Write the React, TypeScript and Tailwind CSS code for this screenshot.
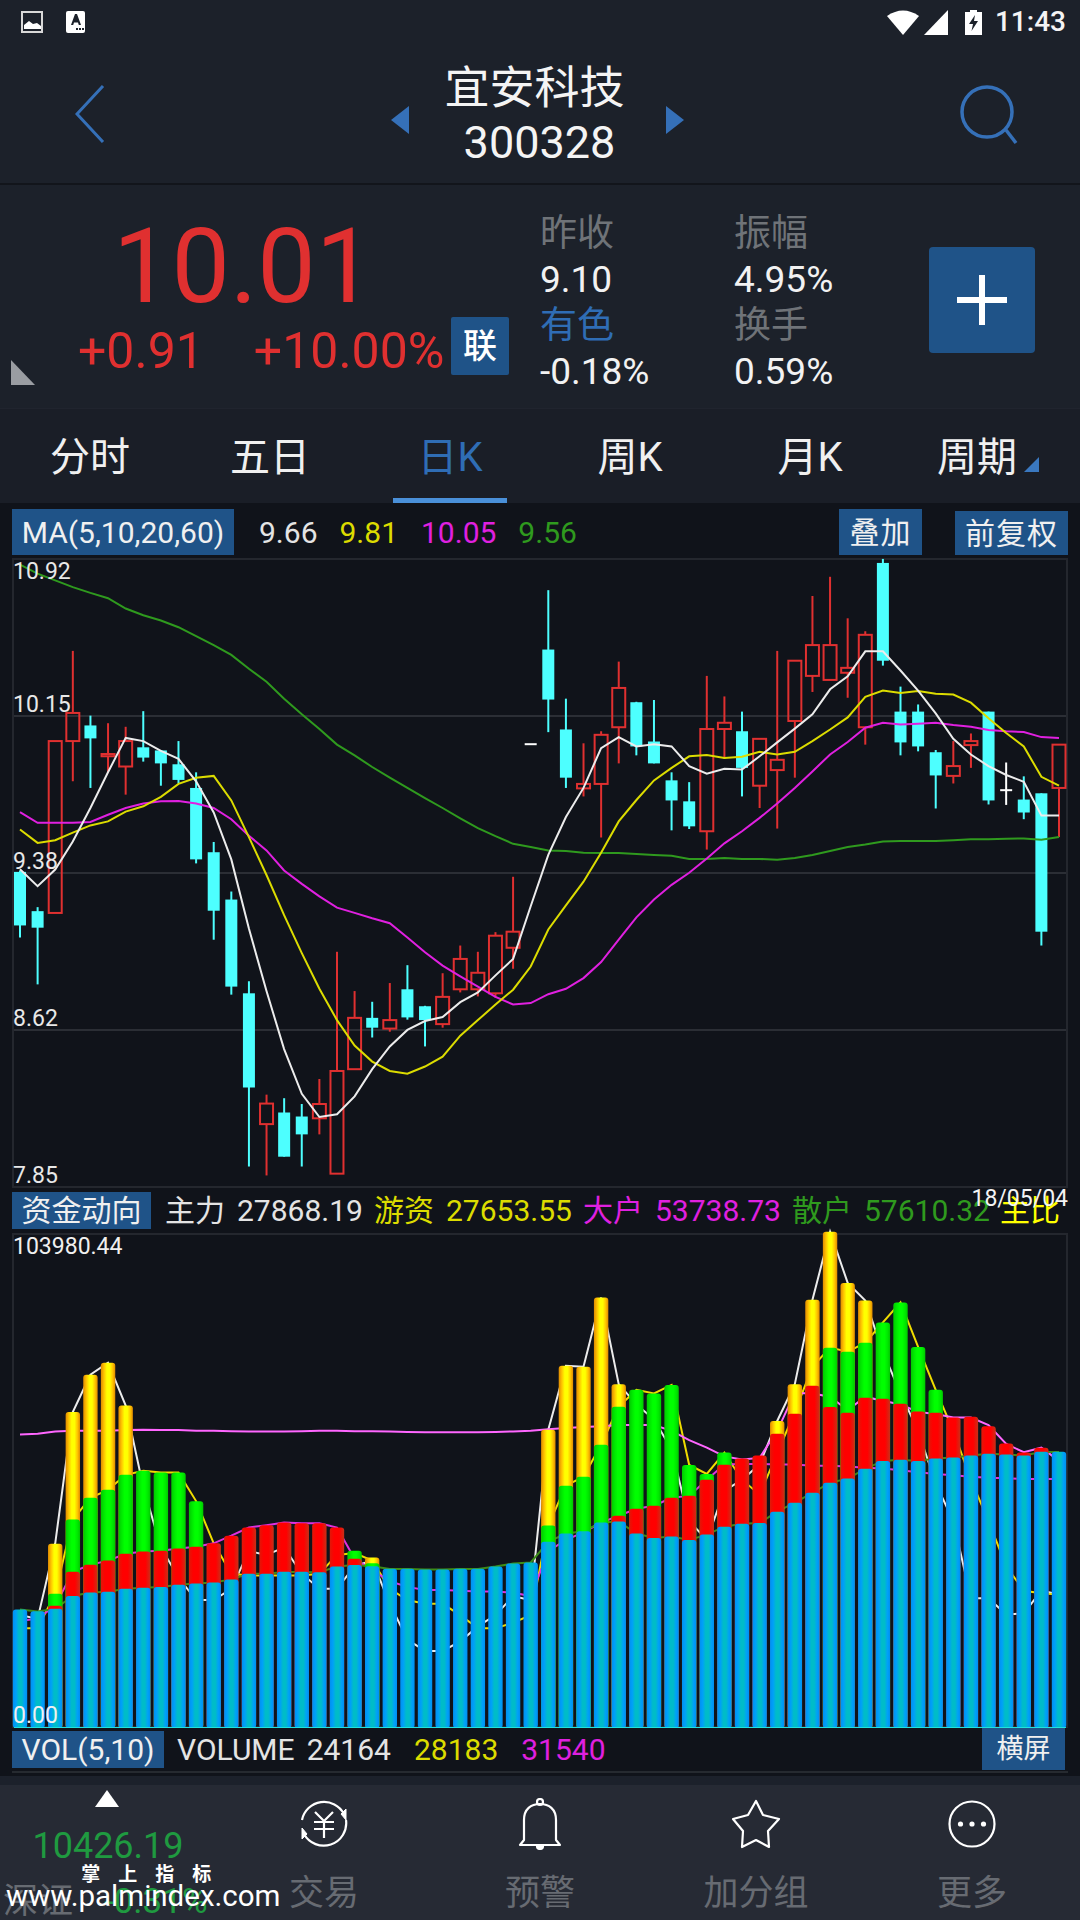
import React from "react";

// type, wick top, body top, body bottom, wick bottom (y values read off the chart crops)
type Candle = ["c" | "r" | "w", number, number, number, number];

const candles: Candle[] = [
  ["c", 830, 833, 953, 980],
  ["c", 912, 921, 958, 1085],
  ["r", 540, 540, 925, 925],
  ["r", 338, 477, 540, 630],
  ["c", 483, 505, 534, 645],
  ["r", 500, 569, 574, 610],
  ["r", 508, 540, 597, 660],
  ["c", 473, 554, 577, 586],
  ["c", 560, 561, 590, 640],
  ["c", 540, 592, 627, 635],
  ["c", 610, 645, 805, 814],
  ["c", 766, 789, 920, 985],
  ["c", 877, 895, 1090, 1108],
  ["c", 1078, 1105, 1316, 1493],
  ["r", 1332, 1352, 1398, 1513],
  ["c", 1340, 1372, 1471, 1471],
  ["c", 1353, 1381, 1421, 1493],
  ["r", 1297, 1353, 1385, 1421],
  ["r", 1012, 1279, 1509, 1509],
  ["r", 1100, 1160, 1275, 1275],
  ["c", 1124, 1160, 1182, 1204],
  ["r", 1082, 1165, 1184, 1191],
  ["c", 1042, 1096, 1159, 1164],
  ["c", 1133, 1134, 1165, 1224],
  ["r", 1060, 1113, 1174, 1182],
  ["r", 998, 1028, 1096, 1103],
  ["r", 1012, 1059, 1096, 1112],
  ["r", 968, 976, 1105, 1115],
  ["r", 844, 967, 1003, 1050],
  ["w", 548, 547, 549, 548],
  ["c", 202, 335, 447, 520],
  ["c", 445, 514, 622, 645],
  ["r", 545, 636, 646, 664],
  ["r", 518, 526, 636, 756],
  ["r", 362, 421, 509, 590],
  ["c", 452, 453, 552, 572],
  ["c", 448, 541, 590, 590],
  ["c", 610, 628, 673, 740],
  ["c", 632, 675, 731, 737],
  ["r", 394, 513, 742, 783],
  ["r", 440, 499, 513, 580],
  ["c", 474, 518, 600, 664],
  ["r", 535, 535, 640, 690],
  ["r", 338, 582, 605, 736],
  ["r", 360, 360, 495, 622],
  ["r", 215, 325, 394, 430],
  ["r", 172, 325, 403, 403],
  ["r", 265, 376, 387, 443],
  ["r", 294, 302, 509, 548],
  ["c", 132, 141, 360, 371],
  ["c", 418, 474, 543, 572],
  ["c", 458, 474, 552, 563],
  ["c", 560, 565, 617, 691],
  ["r", 540, 596, 618, 635],
  ["r", 523, 540, 549, 600],
  ["c", 474, 474, 673, 682],
  ["w", 588, 650, 653, 683],
  ["c", 619, 671, 700, 715],
  ["c", 657, 657, 967, 998],
  ["r", 548, 548, 645, 755],
];

const ma5 = [827, 865, 828, 765, 690, 610, 533, 540, 562, 580, 630, 700, 805, 960, 1100, 1230, 1330, 1382, 1376, 1336, 1275, 1224, 1187, 1167, 1158, 1125, 1103, 1065, 1028, 910, 795, 710, 645, 556, 531, 552, 547, 552, 596, 613, 602, 604, 574, 543, 512, 480, 424, 395, 339, 339, 382, 427, 478, 535, 570, 596, 616, 631, 707, 707];
const ma10 = [738, 768, 762, 745, 729, 720, 698, 686, 665, 636, 622, 618, 673, 755, 840, 930, 1015, 1095, 1165, 1222, 1258, 1279, 1285, 1269, 1247, 1200, 1165, 1130, 1097, 1045, 962, 908, 855, 790, 720, 672, 628, 600, 574, 571, 578, 575, 564, 570, 564, 540, 514, 487, 441, 427, 432, 428, 434, 436, 454, 489, 522, 552, 620, 640];
const ma20 = [699, 723, 723, 723, 721, 705, 690, 680, 675, 674, 680, 690, 715, 752, 785, 830, 860, 888, 913, 925, 937, 948, 980, 1013, 1043, 1067, 1090, 1113, 1130, 1127, 1107, 1095, 1071, 1035, 985, 935, 895, 862, 835, 803, 769, 742, 712, 680, 645, 608, 570, 542, 510, 499, 503, 501, 499, 504, 508, 515, 518, 520, 531, 533];
const ma60 = [145, 165, 180, 195, 208, 220, 243, 258, 270, 285, 305, 325, 347, 378, 407, 445, 480, 513, 548, 572, 598, 622, 645, 668, 690, 713, 735, 753, 770, 777, 785, 786, 790, 791, 791, 793, 795, 797, 804, 804, 802, 804, 804, 806, 802, 795, 786, 777, 772, 765, 764, 764, 764, 762, 760, 760, 759, 758, 761, 755];

// blue, red, green, yellow tops; 0 = segment missing
const bars: number[][] = [
  [1115, 0, 0, 0], [1120, 0, 0, 0], [1113, 1105, 1073, 940], [1079, 1015, 876, 590], [1070, 996, 818, 491],
  [1068, 985, 797, 459], [1060, 967, 757, 573], [1057, 961, 746, 0], [1055, 959, 751, 0], [1049, 953, 751, 0],
  [1046, 948, 827, 0], [1043, 939, 0, 0], [1035, 919, 0, 0], [1020, 897, 0, 0], [1020, 891, 0, 0],
  [1015, 884, 0, 0], [1015, 886, 0, 0], [1016, 886, 0, 0], [1001, 897, 0, 0], [997, 980, 959, 0],
  [1000, 0, 992, 977], [1007, 0, 0, 0], [1007, 0, 0, 0], [1009, 0, 0, 0], [1009, 0, 0, 0],
  [1007, 0, 0, 0], [1007, 0, 0, 0], [1001, 0, 0, 0], [993, 0, 0, 0], [990, 0, 0, 0],
  [935, 0, 892, 637], [913, 0, 786, 467], [907, 0, 762, 470], [884, 0, 677, 286], [881, 866, 576, 516],
  [913, 847, 531, 0], [925, 839, 541, 0], [921, 818, 518, 0], [930, 813, 731, 0], [916, 770, 755, 0],
  [895, 730, 698, 0], [887, 714, 0, 0], [885, 706, 0, 0], [855, 648, 0, 614], [831, 595, 0, 516],
  [805, 520, 0, 292], [778, 577, 419, 111], [767, 592, 430, 247], [741, 552, 406, 294], [720, 555, 352, 0],
  [717, 568, 299, 0], [720, 589, 417, 0], [714, 592, 531, 0], [711, 605, 0, 0], [706, 603, 0, 0],
  [701, 628, 0, 0], [703, 674, 0, 0], [706, 698, 0, 0], [696, 685, 0, 0], [696, 0, 0, 0],
];

const flowWhite = [1130, 1140, 940, 590, 491, 459, 573, 790, 950, 1030, 1090, 1090, 1060, 960, 970, 950, 1020, 1060, 1060, 1000, 985, 1100, 1195, 1225, 1225, 1200, 1160, 1130, 1080, 1090, 637, 467, 470, 286, 516, 570, 610, 690, 880, 930, 800, 770, 730, 614, 516, 292, 111, 247, 294, 430, 540, 640, 780, 880, 1085, 1085, 1128, 1125, 1065, 1075];
const flowYellow = [1165, 1165, 1073, 876, 818, 797, 757, 746, 751, 751, 827, 939, 1020, 1025, 1025, 1025, 1025, 1020, 970, 965, 985, 1060, 1090, 1100, 1100, 1130, 1165, 1165, 1150, 1130, 892, 786, 762, 677, 576, 531, 541, 518, 731, 755, 698, 770, 810, 700, 590, 470, 419, 430, 406, 352, 299, 417, 531, 640, 770, 880, 1000, 1065, 1072, 1075];
const flowMagenta = [1145, 1140, 1105, 1015, 996, 985, 967, 961, 959, 953, 948, 939, 919, 897, 891, 884, 886, 886, 897, 980, 1010, 1040, 1055, 1063, 1063, 1065, 1067, 1067, 1070, 1080, 960, 930, 910, 884, 866, 847, 839, 818, 813, 770, 730, 728, 728, 730, 730, 733, 733, 735, 738, 740, 745, 750, 755, 758, 762, 765, 766, 768, 768, 768];
const flowPink = [650, 648, 642, 640, 640, 640, 638, 637, 638, 638, 640, 640, 641, 642, 642, 642, 641, 640, 640, 641, 641, 642, 643, 644, 644, 644, 644, 643, 642, 640, 636, 633, 630, 628, 625, 625, 625, 640, 665, 685, 708, 716, 712, 640, 540, 540, 550, 585, 550, 560, 570, 590, 595, 605, 605, 625, 675, 697, 685, 720];

const xAt = (i: number) => 20 + i * 17.61;
const kY = (v: number) => 500 + v / 2.24;
const vY = (v: number) => 1190 + v / 2.658;

function points(values: number[], toY: (v: number) => number) {
  return values.map((v, i) => `${xAt(i).toFixed(1)},${toY(v).toFixed(1)}`).join(" ");
}

function KLineChart() {
  return (
    <svg viewBox="14 560 1052 626" className="block w-full h-full overflow-visible">
      {[716, 873, 1030].map((y) => (
        <line key={y} x1="14" x2="1066" y1={y} y2={y} stroke="#2b2e35" strokeWidth="2" />
      ))}
      {candles.map(([type, wickTop, top, bottom, wickBottom], i) => {
        const x = xAt(i);
        if (type === "c") {
          return (
            <g key={i}>
              <line x1={x} x2={x} y1={kY(wickTop)} y2={kY(wickBottom)} stroke="#4dffff" strokeWidth="2" />
              <rect x={x - 6} y={kY(top)} width="12" height={kY(bottom) - kY(top)} fill="#4dffff" />
            </g>
          );
        }
        if (type === "w") {
          return (
            <g key={i}>
              <line x1={x} x2={x} y1={kY(wickTop)} y2={kY(wickBottom)} stroke="#ffffff" strokeWidth="2" />
              <line x1={x - 6} x2={x + 6} y1={kY(top)} y2={kY(top)} stroke="#ffffff" strokeWidth="2" />
            </g>
          );
        }
        return (
          <g key={i}>
            <line x1={x} x2={x} y1={kY(wickTop)} y2={kY(top)} stroke="#e03030" strokeWidth="2" />
            <line x1={x} x2={x} y1={kY(bottom)} y2={kY(wickBottom)} stroke="#e03030" strokeWidth="2" />
            <rect x={x - 6.5} y={kY(top)} width="13" height={Math.max(kY(bottom) - kY(top), 2)} fill="none" stroke="#e03030" strokeWidth="2" />
          </g>
        );
      })}
      <polyline points={points(ma60, kY)} fill="none" stroke="#2f9a1e" strokeWidth="2" />
      <polyline points={points(ma20, kY)} fill="none" stroke="#e020e0" strokeWidth="2" />
      <polyline points={points(ma10, kY)} fill="none" stroke="#dcdc00" strokeWidth="2" />
      <polyline points={points(ma5, kY)} fill="none" stroke="#ececec" strokeWidth="2" />
    </svg>
  );
}

function Stops({ edge, mid, center }: { edge: string; mid: string; center: string }) {
  return (
    <>
      <stop offset="0" stopColor={edge} />
      <stop offset="0.22" stopColor={mid} />
      <stop offset="0.42" stopColor={center} />
      <stop offset="0.62" stopColor={center} />
      <stop offset="0.82" stopColor={mid} />
      <stop offset="1" stopColor={edge} />
    </>
  );
}

function FlowChart() {
  const base = 1728;
  const fills = ["url(#barBlue)", "url(#barRed)", "url(#barGreen)", "url(#barYellow)"];
  return (
    <svg viewBox="14 1235 1052 491" className="block w-full h-full overflow-visible">
      <defs>
        <linearGradient id="barYellow">
          <Stops edge="#e08a00" mid="#ffc400" center="#ffff00" />
        </linearGradient>
        <linearGradient id="barGreen">
          <Stops edge="#00c800" mid="#00e800" center="#00ff00" />
        </linearGradient>
        <linearGradient id="barRed">
          <stop offset="0" stopColor="#e01808" />
          <stop offset="0.3" stopColor="#ff0000" />
          <stop offset="0.65" stopColor="#ff0000" />
          <stop offset="1" stopColor="#c83018" />
        </linearGradient>
        <linearGradient id="barBlue">
          <Stops edge="#0090f0" mid="#00a0f8" center="#00bcc8" />
        </linearGradient>
      </defs>
      <polyline points={points(flowWhite, vY)} fill="none" stroke="#ececec" strokeWidth="2" />
      <polyline points={points(flowYellow, vY)} fill="none" stroke="#f0dc00" strokeWidth="2" />
      <polyline points={points(flowMagenta, vY)} fill="none" stroke="#e030e0" strokeWidth="2" />
      <polyline points={points(flowPink, vY)} fill="none" stroke="#ff66ff" strokeWidth="2" />
      <polyline points={points(bars.map((b) => b[0]), vY)} fill="none" stroke="#3c8c18" strokeWidth="2" />
      {bars.map((bar, i) => {
        const x = xAt(i) - 7.2;
        return (
          <g key={i}>
            {[3, 2, 1, 0].map((layer) =>
              bar[layer] ? (
                <rect key={layer} x={x} y={vY(bar[layer])} width="14.4" height={base - vY(bar[layer])} rx="3" fill={fills[layer]} />
              ) : null,
            )}
          </g>
        );
      })}
      <line x1="14" x2="1066" y1="1727.5" y2="1727.5" stroke="#20e0e0" strokeWidth="1" />
    </svg>
  );
}

function Rate({ label, value, blue }: { label: string; value: string; blue?: boolean }) {
  return (
    <>
      <div className={blue ? "text-[#2f6db5]" : "text-[#6f7378]"}>{label}</div>
      <div className="text-[#f2f2f2]">{value}</div>
    </>
  );
}

function NavItem({ label, children }: { label: string; children: React.ReactNode }) {
  return (
    <div className="w-[216px] flex flex-col items-center">
      <div className="h-[52px] mt-[13px] flex items-center justify-center">{children}</div>
      <div className="mt-[26px] text-[35px] leading-[36px] text-[#676b72]">{label}</div>
    </div>
  );
}

export default function App() {
  return (
    <div className="relative w-[1080px] h-[1920px] overflow-hidden bg-[#1c212a] font-[Roboto,'Noto_Sans_CJK_SC',sans-serif] text-white">
      {/* status bar */}
      <div className="h-12 flex items-center px-[21px]">
        <svg width="23" height="23" viewBox="0 0 23 23" className="-mt-1">
          <rect x="1" y="1" width="20" height="20" fill="none" stroke="#d8d8d8" strokeWidth="2" />
          <path d="M3 18 L3 14 L8 10 L12 13 L16 12 L20 15 L20 18 Z" fill="#ffffff" />
        </svg>
        <svg width="20" height="22" viewBox="0 0 20 22" className="ml-[22px] -mt-1">
          <rect x="0" y="0" width="19" height="22" rx="2" fill="#ffffff" />
          <path d="M5 14 L9 3 L11 3 L15 14 L12.8 14 L12 11.5 L8 11.5 L7.2 14 Z" fill="#1c212a" />
          <rect x="10" y="17" width="2" height="2" fill="#1c212a" />
          <rect x="13" y="17" width="2" height="2" fill="#1c212a" />
          <rect x="16" y="17" width="2" height="2" fill="#1c212a" />
        </svg>
        <svg width="32" height="25" viewBox="0 0 32 25" className="ml-auto -mt-1">
          <path d="M0 6 Q16 -5 32 6 L16 25 Z" fill="#ffffff" />
        </svg>
        <svg width="24" height="25" viewBox="0 0 24 25" className="ml-[5px] -mt-1">
          <path d="M24 0 L24 25 L0 25 Z" fill="#ffffff" />
        </svg>
        <svg width="17" height="25" viewBox="0 0 17 25" className="ml-[17px] -mt-1">
          <path d="M5 0 L12 0 L12 2 L17 2 L17 25 L0 25 L0 2 L5 2 Z" fill="#ffffff" />
          <path d="M10 5 L4 14 L8 14 L6.5 21 L13 11 L9 11 Z" fill="#1c212a" />
        </svg>
        <span className="ml-[13px] -mr-[7px] -mt-1 text-[28px] leading-none text-[#f4f4f4] font-medium">11:43</span>
      </div>

      {/* header */}
      <div className="h-[135px] flex items-center justify-between pl-[75px] pr-[62px]">
        <svg width="30" height="58" viewBox="0 0 30 58" className="-mt-[4px]">
          <path d="M28 1 L2 29 L28 57" fill="none" stroke="#3570b8" strokeWidth="3" />
        </svg>
        <div className="w-[293px] ml-[10px] flex items-center justify-between">
          <svg width="18" height="28" viewBox="0 0 18 28" className="mt-[8px]">
            <path d="M18 0 L18 28 L0 14 Z" fill="#3570b8" />
          </svg>
          <div className="flex flex-col items-center -ml-[6px]">
            <div className="text-[45px] leading-[54px] text-[#f4f4f4]">宜安科技</div>
            <div className="pl-[10px] text-[45px] leading-[54px] text-[#f4f4f4]">300328</div>
          </div>
          <svg width="18" height="28" viewBox="0 0 18 28" className="mt-[8px]">
            <path d="M0 0 L0 28 L18 14 Z" fill="#3570b8" />
          </svg>
        </div>
        <svg width="58" height="60" viewBox="0 0 58 60" className="-mt-[2px]">
          <circle cx="27" cy="27" r="25" fill="none" stroke="#3570b8" strokeWidth="3.5" />
          <path d="M46 45 L56 58" fill="none" stroke="#3570b8" strokeWidth="3.5" />
        </svg>
      </div>
      <div className="h-[2px] bg-[#12151b]" />

      {/* quote */}
      <div className="relative h-[223px] flex items-start">
        <svg width="24" height="25" viewBox="0 0 24 25" className="absolute left-[11px] bottom-[23px]">
          <path d="M0 0 L24 25 L0 25 Z" fill="#9a9da2" />
        </svg>
        <div className="w-[451px] shrink-0">
          <div className="pt-[44px] pl-[113px] text-[104px] leading-[76px] text-[#e03030]">10.01</div>
          <div className="mt-[24px] pl-[78px] flex gap-[50px] whitespace-nowrap text-[50px] leading-[44px] text-[#e03030]">
            <span>+0.91</span>
            <span>+10.00%</span>
          </div>
        </div>
        <div className="mt-[132px] w-[58px] h-[58px] flex items-center justify-center bg-[#1f5388] rounded-[2px] text-[34px] font-medium">联</div>
        <div className="ml-[31px] w-[194px] pt-[26px] text-[37px] leading-[46px]">
          <Rate label="昨收" value="9.10" />
          <Rate label="有色" value="-0.18%" blue />
        </div>
        <div className="w-[195px] pt-[26px] text-[37px] leading-[46px]">
          <Rate label="振幅" value="4.95%" />
          <Rate label="换手" value="0.59%" />
        </div>
        <div className="mt-[62px] w-[106px] h-[106px] flex items-center justify-center bg-[#1f5388] rounded-[4px]">
          <svg width="50" height="50" viewBox="0 0 50 50">
            <path d="M25 0 L25 50 M0 25 L50 25" stroke="#ffffff" strokeWidth="6" />
          </svg>
        </div>
      </div>

      {/* period tabs */}
      <div className="h-[95px] grid grid-cols-6 bg-[#1a1e27] border-t border-[#20242e] text-[40px] text-[#f0f0f0]">
        {["分时", "五日", "日K", "周K", "月K"].map((tab) => (
          <div key={tab} className="flex flex-col items-center">
            <div className={`flex-1 flex items-center pt-[9px] ${tab === "日K" ? "text-[#2f6db5]" : ""}`}>{tab}</div>
            <div className={`h-[5px] w-[114px] ${tab === "日K" ? "bg-[#4a90d9]" : ""}`} />
          </div>
        ))}
        <div className="flex flex-col items-center">
          <div className="flex-1 flex items-center gap-[7px] pt-[9px] pr-[4px]">
            <span>周期</span>
            <svg width="15" height="15" viewBox="0 0 15 15" className="mt-[12px]">
              <path d="M15 0 L15 15 L0 15 Z" fill="#3a78c0" />
            </svg>
          </div>
          <div className="h-[5px]" />
        </div>
      </div>

      {/* charts */}
      <div className="relative h-[1273px] bg-[#10131a]">
        <div className="flex items-start pt-[6px] pl-3 h-[55px] text-[30px] leading-[48px]">
          <div className="w-[222px] h-[46px] bg-[#1f5388] text-center text-[#f0f0f0]">MA(5,10,20,60)</div>
          <span className="ml-[25px] text-[#e4e4e4]">9.66</span>
          <span className="ml-[22px] text-[#dcdc00]">9.81</span>
          <span className="ml-[23px] text-[#e020e0]">10.05</span>
          <span className="ml-[22px] text-[#2f9a1e]">9.56</span>
          <div className="ml-auto w-[83px] h-[46px] bg-[#1f5388] text-center text-[#f0f0f0] tracking-[1px]">叠加</div>
          <div className="ml-[33px] mr-3 mt-[2px] w-[113px] h-[44px] bg-[#1f5388] text-center leading-[46px] text-[#f0f0f0] tracking-[1px]">前复权</div>
        </div>

        <div className="relative mx-3 w-[1056px] h-[630px] border-2 border-[#24272e]">
          <KLineChart />
          <span className="absolute -left-[1px] top-[-1px] text-[23px] leading-[26px] text-[#e8e8e8]">10.92</span>
          <span className="absolute -left-[1px] top-[132px] text-[23px] leading-[26px] text-[#e8e8e8]">10.15</span>
          <span className="absolute -left-[1px] top-[289px] text-[23px] leading-[26px] text-[#e8e8e8]">9.38</span>
          <span className="absolute -left-[1px] top-[446px] text-[23px] leading-[26px] text-[#e8e8e8]">8.62</span>
          <span className="absolute -left-[1px] top-[603px] text-[23px] leading-[26px] text-[#e8e8e8]">7.85</span>
        </div>

        <div className="relative flex items-center h-[45px] pl-3 pt-[4px] pb-[4px] text-[30px]">
          <div className="w-[139px] h-[37px] shrink-0 bg-[#1f5388] text-center leading-[37px] text-[#f0f0f0]">资金动向</div>
          <div className="ml-[14px] flex whitespace-nowrap leading-[37px]">
            <span className="text-[#e4e4e4] w-[72px]">主力</span>
            <span className="text-[#e4e4e4] w-[137px]">27868.19</span>
            <span className="text-[#dcdc00] w-[72px]">游资</span>
            <span className="text-[#dcdc00] w-[137px]">27653.55</span>
            <span className="text-[#e020e0] w-[72px]">大户</span>
            <span className="text-[#e020e0] w-[137px]">53738.73</span>
            <span className="text-[#2f9a1e] w-[72px]">散户</span>
            <span className="text-[#2f9a1e] w-[136px]">57610.32</span>
            <span className="text-[#ffff00]">主比</span>
          </div>
          <span className="absolute right-[12px] top-[-2px] text-[23px] leading-[26px] text-[#f4f4f4]">18/05/04</span>
        </div>

        <div className="relative mx-3 w-[1056px] h-[495px] border-2 border-[#24272e]">
          <FlowChart />
          <span className="absolute -left-[1px] top-[-1px] text-[23px] leading-[26px] text-[#f0f0f0]">103980.44</span>
          <span className="absolute -left-[1px] top-[468px] text-[23px] leading-[26px] text-[#f0f0f0]">0.00</span>
        </div>

        <div className="flex items-start h-[43px] pl-3 text-[30px]">
          <div className="mt-[3px] w-[152px] h-[37px] bg-[#1f5388] text-center leading-[37px] text-[#f0f0f0]">VOL(5,10)</div>
          <span className="ml-[13px] mt-[3px] leading-[37px] text-[#e4e4e4]">VOLUME</span>
          <span className="ml-[12px] mt-[3px] leading-[37px] text-[#e4e4e4]">24164</span>
          <span className="ml-[23px] mt-[3px] leading-[37px] text-[#dcdc00]">28183</span>
          <span className="ml-[23px] mt-[3px] leading-[37px] text-[#e020e0]">31540</span>
          <div className="ml-auto mr-[15px] w-[83px] h-[42px] bg-[#1f5388] text-center text-[27px] leading-[42px] text-[#f0f0f0]">横屏</div>
        </div>
        <div className="mx-3 h-[2px] bg-[#262a30]" />
      </div>

      {/* bottom nav */}
      <div className="h-[9px] bg-[#1c212b]" />
      <div className="h-[135px] flex bg-[#262a34]">
        <div className="w-[216px] flex flex-col items-center">
          <svg width="24" height="17" viewBox="0 0 24 17" className="-ml-[2px] mt-[5px]">
            <path d="M12 0 L24 17 L0 17 Z" fill="#ffffff" />
          </svg>
          <div className="mt-[21px] text-[36px] leading-[36px] text-[#1f9a40]">10426.19</div>
          <div className="mt-[20px] self-start pl-[3px] flex items-center text-[35px] leading-[36px]">
            <span className="text-[#676b72]">深证</span>
            <span className="ml-[31px] text-[#1f9a40]">-0.31%</span>
          </div>
        </div>
        <NavItem label="交易">
          <svg width="48" height="48" viewBox="0 0 48 48" fill="none" stroke="#ffffff" strokeWidth="2.2">
            <path d="M2 20 A22.5 22.5 0 0 1 44 14" />
            <path d="M46 20 A22.5 22.5 0 0 1 4 34" />
            <path d="M46 9 L46 20 L41 14 Z" fill="#ffffff" strokeWidth="1" />
            <path d="M2 39 L2 28 L7 34 Z" fill="#ffffff" strokeWidth="1" />
            <path d="M15 12 L24 21 L33 12 M14 22 L34 22 M14 29 L34 29 M24 21 L24 38" />
          </svg>
        </NavItem>
        <NavItem label="预警">
          <svg width="44" height="52" viewBox="0 0 44 52" fill="none" stroke="#ffffff" strokeWidth="2.2">
            <path d="M6 42 L6 22 C6 11 13 6 22 6 C31 6 38 11 38 22 L38 42 L42 47 L2 47 Z" strokeLinejoin="round" />
            <circle cx="22" cy="4" r="3" />
            <path d="M19 48 A3 3 0 0 0 25 48 Z" fill="#ffffff" />
          </svg>
        </NavItem>
        <NavItem label="加分组">
          <svg width="50" height="50" viewBox="0 0 50 50" fill="none" stroke="#ffffff" strokeWidth="2.2" strokeLinejoin="round">
            <path d="M25 2 L32 16 L48 20 L37 32 L38 48 L25 41 L11 48 L12 32 L2 20 L17 16 Z" />
          </svg>
        </NavItem>
        <NavItem label="更多">
          <svg width="48" height="48" viewBox="0 0 48 48" fill="none" stroke="#ffffff" strokeWidth="2.2">
            <circle cx="24" cy="24" r="22.5" />
            <circle cx="12.5" cy="24" r="2.6" fill="#ffffff" stroke="none" />
            <circle cx="24" cy="24" r="2.6" fill="#ffffff" stroke="none" />
            <circle cx="35.5" cy="24" r="2.6" fill="#ffffff" stroke="none" />
          </svg>
        </NavItem>
      </div>

      {/* watermark */}
      <div className="absolute left-[6px] top-[1864px] flex flex-col items-center whitespace-nowrap text-white">
        <span className="text-[19px] leading-[22px] font-bold tracking-[18px] pl-[24px]">掌上指标</span>
        <span className="-mt-[7px] text-[29.5px] leading-[34px]">www.palmindex.com</span>
      </div>
    </div>
  );
}
